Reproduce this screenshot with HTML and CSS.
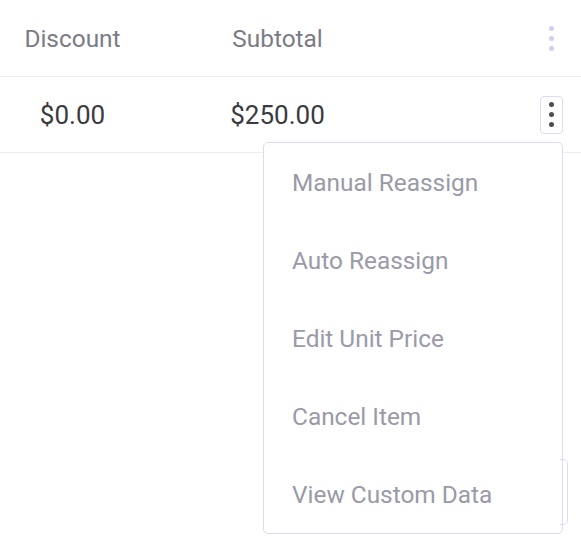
FILE: index.html
```html
<!DOCTYPE html>
<html lang="en">
<head>
<meta charset="utf-8">
<title>Line items</title>
<link rel="stylesheet" href="styles.css">
</head>
<body>
<div class="table">
  <div class="row head">
    <div class="cell c1">Discount</div>
    <div class="cell c2">Subtotal</div>
    <div class="cell c3">
      <span class="kebab faint"><b class="dot"></b><b class="dot"></b><b class="dot"></b></span>
    </div>
  </div>
  <div class="row body">
    <div class="cell c1">$0.00</div>
    <div class="cell c2">$250.00</div>
    <div class="cell c3">
      <span class="kebab active"><b class="dot"></b><b class="dot"></b><b class="dot"></b></span>
    </div>
  </div>
  <div class="popover">
    <div class="opt">Manual Reassign</div>
    <div class="opt">Auto Reassign</div>
    <div class="opt">Edit Unit Price</div>
    <div class="opt">Cancel Item</div>
    <div class="opt">View Custom Data</div>
    <span class="popover-tab"></span>
  </div>
</div>
</body>
</html>
```

FILE: styles.css
```css
html, body {
  margin: 0;
  padding: 0;
  background: #ffffff;
}
body {
  font-family: Roboto, "Liberation Sans", Arial, sans-serif;
  font-size: 24.4px;
  min-height: 550px;
}
.table {
  position: relative;
  width: 581px;
  min-height: 550px;
}
.row {
  display: flex;
  align-items: center;
  border-bottom: 1px solid #ececfb;
}
.row.head {
  height: 76px;
  color: #7b7b86;
}
.row.body {
  height: 75px;
  color: #3a3a40;
  font-size: 26px;
}
.cell.c1 {
  width: 145px;
  text-align: center;
}
.cell.c2 {
  width: 265px;
  text-align: center;
}
.cell.c3 {
  flex: 1;
  display: flex;
  justify-content: flex-end;
  padding-right: 18px;
}
.kebab {
  width: 23px;
  height: 38px;
  box-sizing: border-box;
  display: flex;
  flex-direction: column;
  align-items: center;
  justify-content: center;
  gap: 5px;
  border-radius: 4px;
}
.dot {
  display: block;
  width: 5px;
  height: 5px;
  border-radius: 50%;
}
.kebab.faint .dot {
  background: #cfcff2;
}
.kebab.active {
  border: 1px solid #dcdcf8;
}
.kebab.active .dot {
  background: #4e4e52;
}
.popover {
  position: absolute;
  left: 263px;
  top: 142px;
  width: 300px;
  box-sizing: border-box;
  display: flex;
  flex-direction: column;
  background: #ffffff;
  border: 1px solid #dcdaf6;
  border-radius: 5px;
}
.opt {
  height: 78px;
  display: flex;
  align-items: center;
  padding-left: 28px;
  color: #9a9aa8;
}
.popover-tab {
  position: absolute;
  right: -6px;
  top: 316px;
  width: 8px;
  height: 66px;
  box-sizing: border-box;
  border: 1px solid #dcdaf6;
  border-left: none;
  border-radius: 0 5px 5px 0;
}
```
